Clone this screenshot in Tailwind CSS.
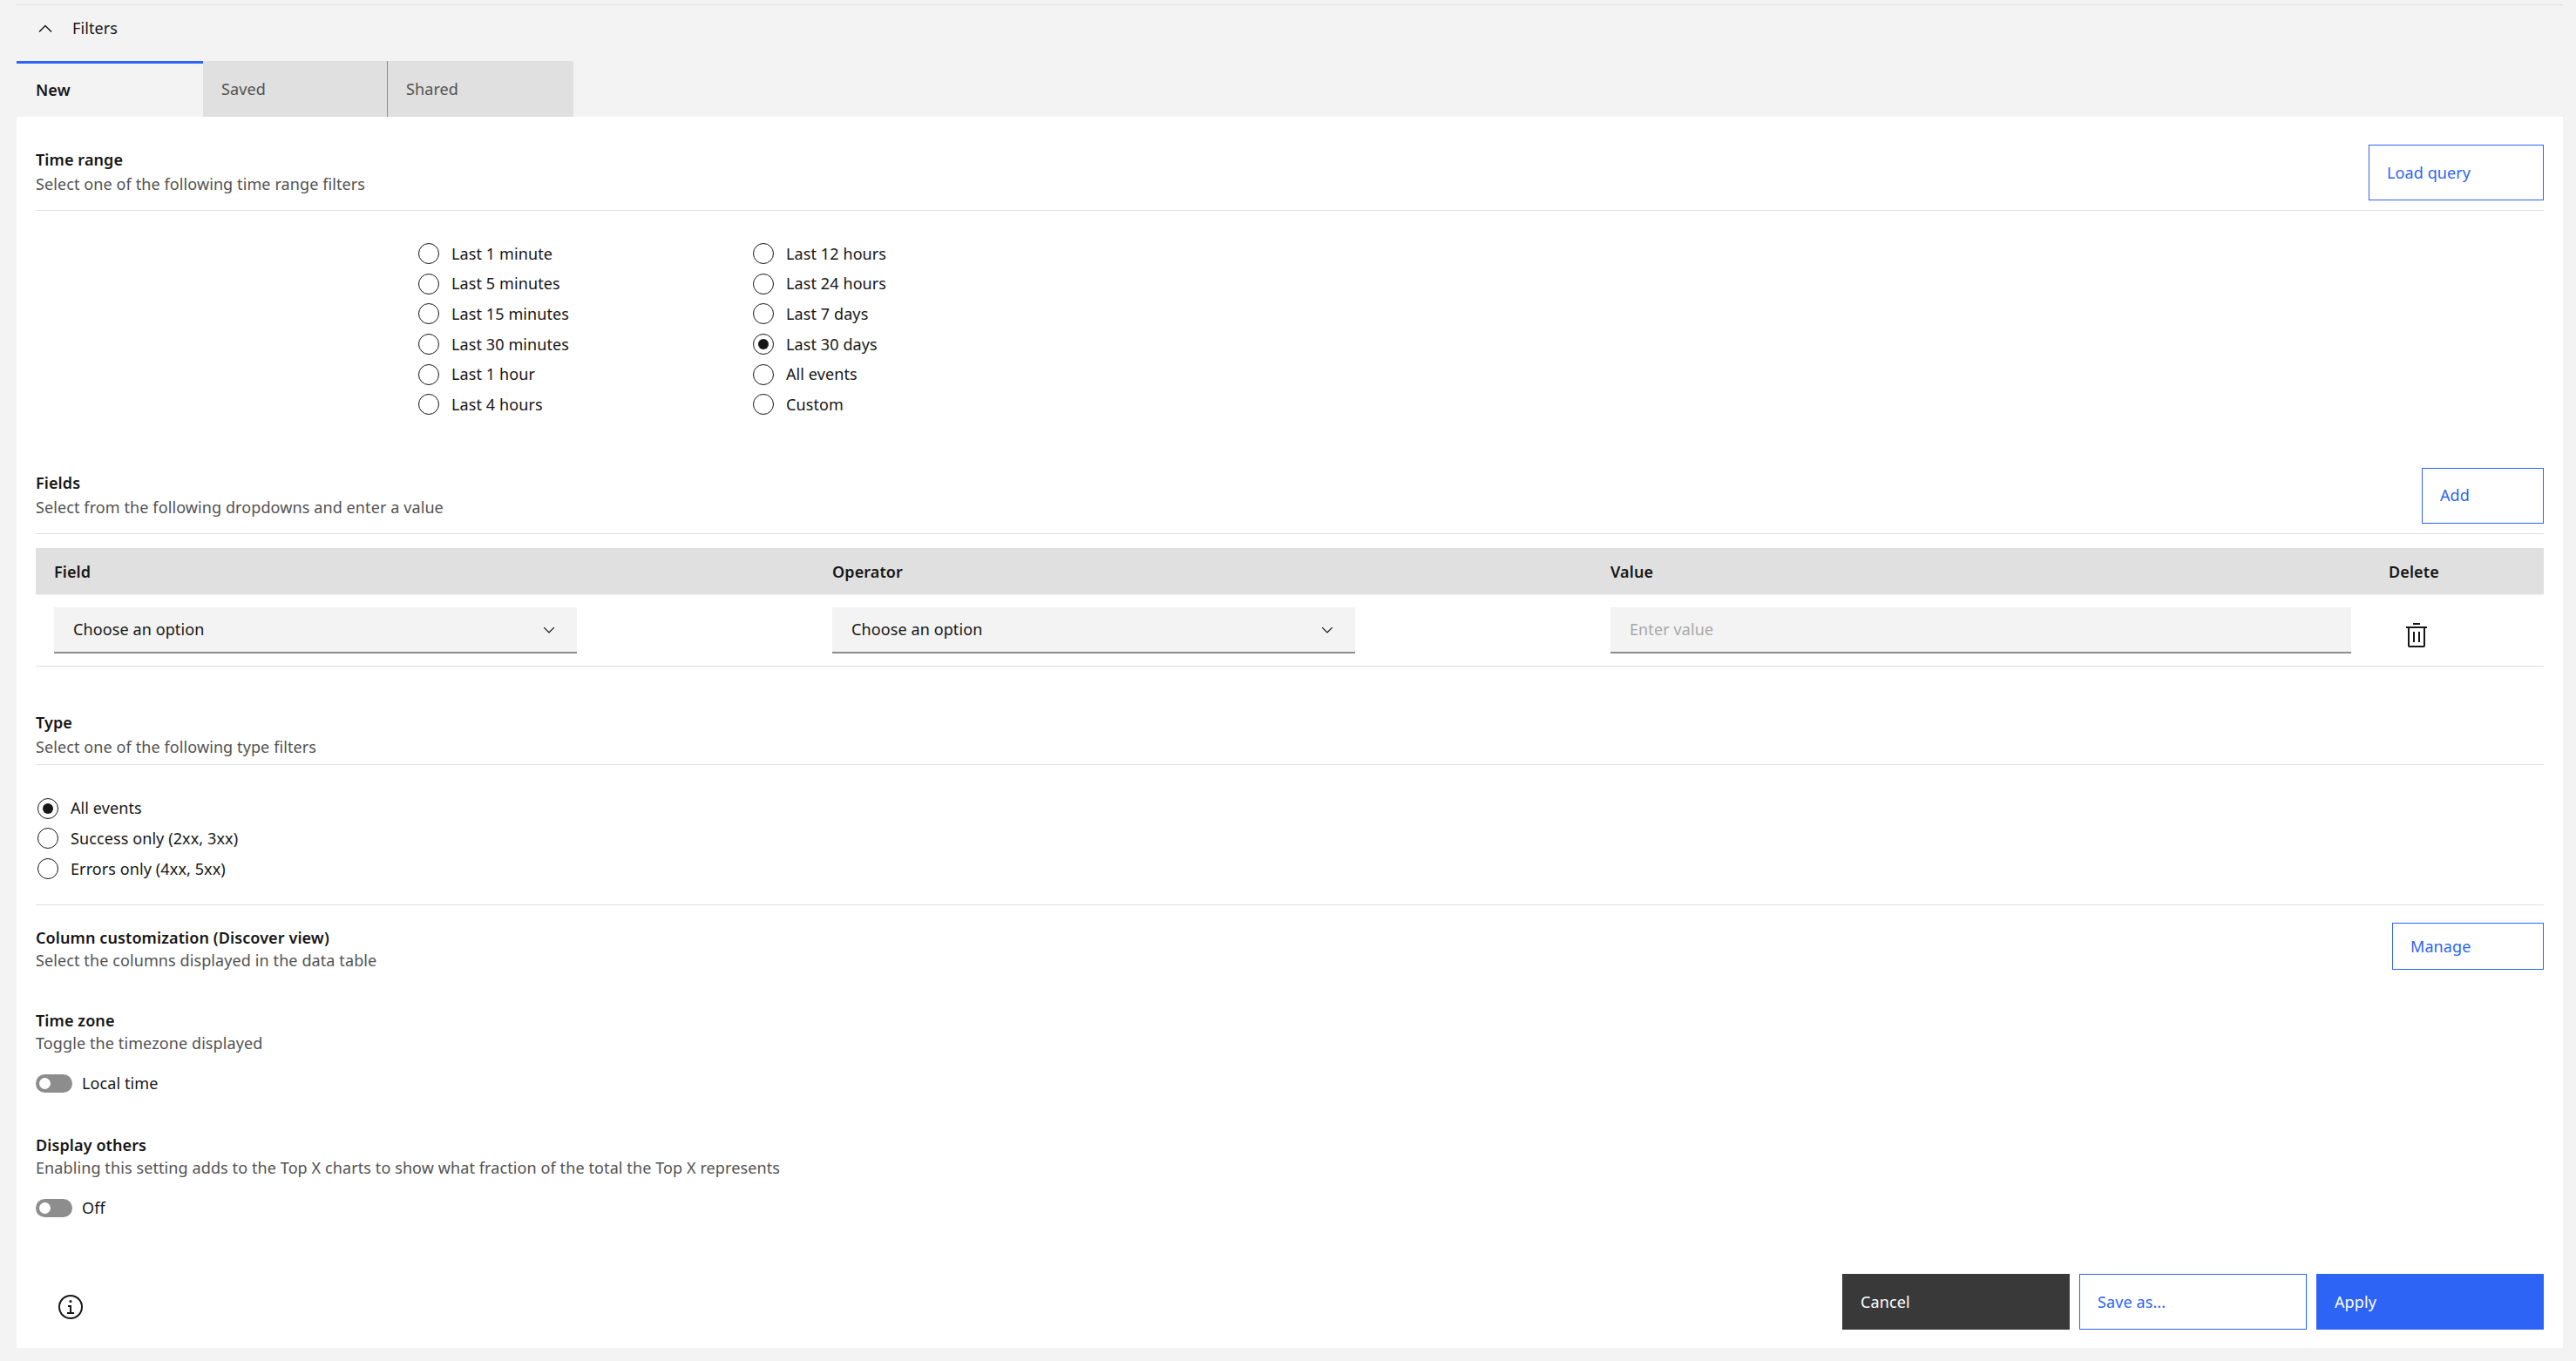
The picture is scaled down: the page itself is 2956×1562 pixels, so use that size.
<!DOCTYPE html>
<html lang="en">
<head>
  <meta charset="UTF-8" />
  <title>Filters</title>
  <script src="https://cdn.jsdelivr.net/npm/@tailwindcss/browser@4"></script>
</head>
<body class="bg-[#f3f3f3] font-['Noto_Sans',sans-serif] text-[18px] tracking-[0.1px] text-[#161616]">
  <div class="h-[1562px] pl-[19px] pr-[15px] flex flex-col pb-[15px]">
    <!-- Filters header -->
    <div class="mt-[5px] h-[65px] border-t border-[#e0e0e0] flex items-center">
      <svg class="w-6 h-6 ml-[21px] -mt-[10px]" viewBox="0 0 32 32" fill="#161616"><path d="M16 10L26 20l-1.4 1.4-8.6-8.6-8.6 8.6L6 20z"/></svg>
      <span class="ml-[19px] -mt-[12px]">Filters</span>
    </div>

    <!-- Tabs -->
    <div class="flex h-[64px] text-[#525252]">
      <div class="w-[214px] bg-[#f3f3f3] border-t-[3px] border-[#2d64f6] pl-[22px] flex items-center font-semibold text-[#161616]">New</div>
      <div class="w-[212px] bg-[#e0e0e0] pl-[21px] flex items-center border-r border-[#8d8d8d]">Saved</div>
      <div class="w-[213px] bg-[#e0e0e0] pl-[21px] flex items-center">Shared</div>
    </div>

    <!-- Panel -->
    <div class="flex-1 bg-white px-[22px] flex flex-col">
      <!-- Time range -->
      <div class="mt-[32px] h-[76px] border-b border-[#e0e0e0] flex justify-between items-start">
        <div class="pt-[3px] leading-[28px]">
          <h2 class="font-semibold">Time range</h2>
          <p class="text-[#525252]">Select one of the following time range filters</p>
        </div>
        <button class="w-[201px] h-[64px] border border-[#2d64f6] text-[#2d64f6] text-left pl-[20px]">Load query</button>
      </div>
      <div class="mt-[32px] pl-[439px] grid grid-cols-[384px_384px] grid-flow-col grid-rows-6 [&>label]:h-[34.6px]">
        <label class="flex items-center gap-[14px]"><span class="w-6 h-6 rounded-full border-[1.5px] border-[#161616]"></span>Last 1 minute</label>
        <label class="flex items-center gap-[14px]"><span class="w-6 h-6 rounded-full border-[1.5px] border-[#161616]"></span>Last 5 minutes</label>
        <label class="flex items-center gap-[14px]"><span class="w-6 h-6 rounded-full border-[1.5px] border-[#161616]"></span>Last 15 minutes</label>
        <label class="flex items-center gap-[14px]"><span class="w-6 h-6 rounded-full border-[1.5px] border-[#161616]"></span>Last 30 minutes</label>
        <label class="flex items-center gap-[14px]"><span class="w-6 h-6 rounded-full border-[1.5px] border-[#161616]"></span>Last 1 hour</label>
        <label class="flex items-center gap-[14px]"><span class="w-6 h-6 rounded-full border-[1.5px] border-[#161616]"></span>Last 4 hours</label>
        <label class="flex items-center gap-[14px]"><span class="w-6 h-6 rounded-full border-[1.5px] border-[#161616]"></span>Last 12 hours</label>
        <label class="flex items-center gap-[14px]"><span class="w-6 h-6 rounded-full border-[1.5px] border-[#161616]"></span>Last 24 hours</label>
        <label class="flex items-center gap-[14px]"><span class="w-6 h-6 rounded-full border-[1.5px] border-[#161616]"></span>Last 7 days</label>
        <label class="flex items-center gap-[14px]"><span class="w-6 h-6 rounded-full border-[1.5px] border-[#161616] flex items-center justify-center"><span class="w-3 h-3 rounded-full bg-[#161616]"></span></span>Last 30 days</label>
        <label class="flex items-center gap-[14px]"><span class="w-6 h-6 rounded-full border-[1.5px] border-[#161616]"></span>All events</label>
        <label class="flex items-center gap-[14px]"><span class="w-6 h-6 rounded-full border-[1.5px] border-[#161616]"></span>Custom</label>
      </div>

      <!-- Fields -->
      <div class="mt-[55px] h-[76px] border-b border-[#e0e0e0] flex justify-between items-start">
        <div class="pt-[3px] leading-[28px]">
          <h2 class="font-semibold">Fields</h2>
          <p class="text-[#525252]">Select from the following dropdowns and enter a value</p>
        </div>
        <button class="w-[140px] h-[64px] border border-[#2d64f6] text-[#2d64f6] text-left pl-[20px]">Add</button>
      </div>
      <div class="mt-[16px] h-[54px] bg-[#e0e0e0] border-b border-[#f3f3f3] pl-[21px] pt-[2px] grid grid-cols-[893px_893px_893px_1fr] items-center font-semibold">
        <span>Field</span><span>Operator</span><span>Value</span><span>Delete</span>
      </div>
      <div class="h-[82px] border-b border-[#e0e0e0] pl-[21px] pt-[1px] grid grid-cols-[893px_893px_893px_1fr] items-center">
        <div class="w-[600px] h-[53px] bg-[#f3f3f3] border-b-2 border-[#8d8d8d] flex items-center justify-between pl-[22px] pr-[22px]">
          <span>Choose an option</span>
          <svg class="w-5 h-5" viewBox="0 0 32 32" fill="#161616"><path d="M16 22L6 12l1.4-1.4 8.6 8.6 8.6-8.6L26 12z"/></svg>
        </div>
        <div class="w-[600px] h-[53px] bg-[#f3f3f3] border-b-2 border-[#8d8d8d] flex items-center justify-between pl-[22px] pr-[22px]">
          <span>Choose an option</span>
          <svg class="w-5 h-5" viewBox="0 0 32 32" fill="#161616"><path d="M16 22L6 12l1.4-1.4 8.6 8.6 8.6-8.6L26 12z"/></svg>
        </div>
        <div class="w-[850px] h-[53px] bg-[#f3f3f3] border-b-2 border-[#8d8d8d] flex items-center pl-[22px] text-[#a8a8a8]">Enter value</div>
        <svg class="w-8 h-8 ml-[16px] mt-[10px]" viewBox="0 0 32 32" fill="#161616">
          <rect x="12" y="12" width="2" height="12"/><rect x="18" y="12" width="2" height="12"/>
          <path d="M4 6V8H6V28a2 2 0 002 2H24a2 2 0 002-2V8h2V6zM8 28V8H24V28z"/><path d="M12 2H20V4H12z"/>
        </svg>
      </div>

      <!-- Type -->
      <div class="mt-[47px] h-[66px] border-b border-[#e0e0e0] pt-[3px] leading-[28px]">
        <h2 class="font-semibold">Type</h2>
        <p class="text-[#525252]">Select one of the following type filters</p>
      </div>
      <div class="mt-[33px] pl-[2px] [&>label]:h-[34.6px]">
        <label class="flex items-center gap-[14px]"><span class="w-6 h-6 rounded-full border-[1.5px] border-[#161616] flex items-center justify-center"><span class="w-3 h-3 rounded-full bg-[#161616]"></span></span>All events</label>
        <label class="flex items-center gap-[14px]"><span class="w-6 h-6 rounded-full border-[1.5px] border-[#161616]"></span>Success only (2xx, 3xx)</label>
        <label class="flex items-center gap-[14px]"><span class="w-6 h-6 rounded-full border-[1.5px] border-[#161616]"></span>Errors only (4xx, 5xx)</label>
      </div>
      <div class="mt-[24px] border-t border-[#e0e0e0]"></div>

      <!-- Column customization -->
      <div class="mt-[20px] flex justify-between items-start">
        <div class="pt-[4px] leading-[26px]">
          <h2 class="font-semibold">Column customization (Discover view)</h2>
          <p class="text-[#525252]">Select the columns displayed in the data table</p>
        </div>
        <button class="w-[174px] h-[54px] border border-[#2d64f6] text-[#2d64f6] text-left pl-[20px]">Manage</button>
      </div>

      <!-- Time zone -->
      <div class="mt-[43px] leading-[26px]">
        <h2 class="font-semibold">Time zone</h2>
        <p class="text-[#525252]">Toggle the timezone displayed</p>
      </div>
      <div class="mt-[20px] flex items-center gap-[11px]">
        <span class="w-[42px] h-[21px] rounded-full bg-[#8d8d8d] flex items-center pl-1"><span class="w-[13px] h-[13px] rounded-full bg-white"></span></span>
        <span>Local time</span>
      </div>

      <!-- Display others -->
      <div class="mt-[44px] leading-[26px]">
        <h2 class="font-semibold">Display others</h2>
        <p class="text-[#525252]">Enabling this setting adds to the Top X charts to show what fraction of the total the Top X represents</p>
      </div>
      <div class="mt-[20px] flex items-center gap-[11px]">
        <span class="w-[42px] h-[21px] rounded-full bg-[#8d8d8d] flex items-center pl-1"><span class="w-[13px] h-[13px] rounded-full bg-white"></span></span>
        <span>Off</span>
      </div>

      <!-- Footer -->
      <div class="mt-auto mb-[21px] flex items-end justify-between">
        <svg class="w-8 h-8 ml-[24px] mb-[10px]" viewBox="0 0 32 32" fill="#161616">
          <path d="M17 22L17 14 13 14 13 16 15 16 15 22 12 22 12 24 20 24 20 22 17 22z"/>
          <path d="M16 8a1.5 1.5 0 101.5 1.5A1.5 1.5 0 0016 8z"/>
          <path d="M16 30A14 14 0 1130 16 14 14 0 0116 30zM16 4A12 12 0 1028 16 12 12 0 0016 4z"/>
        </svg>
        <div class="flex gap-[11px]">
          <button class="w-[261px] h-[64px] bg-[#393939] text-white text-left pl-[21px]">Cancel</button>
          <button class="w-[261px] h-[64px] border border-[#2d64f6] text-[#2d64f6] text-left pl-[20px]">Save as...</button>
          <button class="w-[261px] h-[64px] bg-[#2d64f6] text-white text-left pl-[21px]">Apply</button>
        </div>
      </div>
    </div>
  </div>
</body>
</html>
